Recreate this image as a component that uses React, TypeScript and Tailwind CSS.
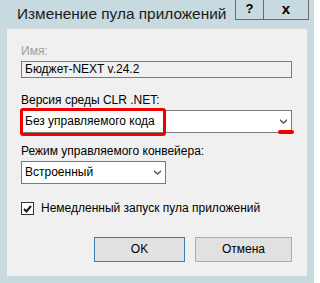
import React from 'react';

function Chevron() {
  return (
    <svg width="7" height="5" viewBox="0 0 7 5" className="shrink-0">
      <path d="M0 0 L3.5 3 L7 0 L7 2 L3.5 5 L0 2 Z" fill="#5f5f5f" />
    </svg>
  );
}

function App() {
  return (
    <div
      className="w-[314px] h-[283px] bg-[#c6dae0] flex flex-col text-black overflow-hidden"
      style={{ fontFamily: '"Liberation Sans", Arial, sans-serif' }}
    >
      {/* Title bar */}
      <div className="h-[28px] flex items-start justify-between pl-[17px] pr-[5px] shrink-0">
        <span className="text-[15.4px] leading-[18px] mt-[5px] text-[#1b1b1b]">Изменение пула приложений</span>
        <div className="flex h-[20px] border-x border-b border-[#6b6b6b]">
          <div className="w-[28px] flex items-center justify-center border-r border-[#6b6b6b] text-[13px] font-bold leading-none pb-[2px]">
            ?
          </div>
          <div className="w-[44px] flex items-center justify-center text-[15px] font-bold leading-none pb-[3px]">
            x
          </div>
        </div>
      </div>

      {/* Dialog body */}
      <div className="mx-[7px] h-[248px] bg-[#f0f0f0] border-t border-[#dadada] pl-[14px] pr-[15px] flex flex-col text-[12px] leading-[15px]">
        <div className="mt-[15px] text-[#a0a0a0]">Имя:</div>
        <div className="mt-[2px] h-[17px] border border-[#7a7a7a] flex items-center px-[3px]">
          Бюджет-NEXT v.24.2
        </div>

        <div className="mt-[15px]">Версия среды CLR .NET:</div>
        <div className="relative mt-[2px] h-[23px] border border-[#7a7a7a] bg-white flex items-center justify-between pl-[3px] pr-[4px]">
          <span>Без управляемого кода</span>
          <Chevron />
          <div className="absolute -left-[2px] -top-[3px] w-[146px] h-[28px] border-[3px] border-[#f00000] rounded-[3px]" />
          <div className="absolute left-[256px] top-[19px] w-[16px] h-[4px] bg-[#f00000] rounded-full" />
        </div>

        <div className="mt-[11px]">Режим управляемого конвейера:</div>
        <div className="mt-[2px] w-[145px] h-[23px] border border-[#7a7a7a] bg-white flex items-center justify-between pl-[3px] pr-[4px]">
          <span>Встроенный</span>
          <Chevron />
        </div>

        <div className="mt-[18px] flex items-center h-[13px]">
          <div className="w-[13px] h-[13px] border border-[#333333] bg-white flex items-center justify-center">
            <svg width="9" height="8" viewBox="0 0 9 8">
              <path d="M1 4 L3.5 6.5 L8 1" stroke="#1a1a1a" strokeWidth="2" fill="none" />
            </svg>
          </div>
          <span className="ml-[7px]">Немедленный запуск пула приложений</span>
        </div>

        <div className="mt-[22px] flex justify-end gap-[10px]">
          <button className="w-[91px] h-[25px] border border-[#3d7bb0] bg-[#e1e1e1] text-[12px]">OK</button>
          <button className="w-[97px] h-[25px] border border-[#adadad] bg-[#e1e1e1] text-[12px]">Отмена</button>
        </div>
      </div>
    </div>
  );
}

export default App;
